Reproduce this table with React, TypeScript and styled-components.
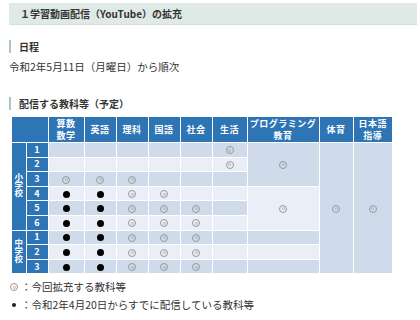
import styled, { createGlobalStyle } from 'styled-components'

const GlobalStyle = createGlobalStyle`
  body {
    margin: 0;
    background: #fff;
    font-family: "Noto Sans CJK JP", "Noto Sans", sans-serif;
    color: #333;
  }
`

const Page = styled.div`
  width: 420px;
  height: 320px;
  padding: 3px 3px 0 9px;
  box-sizing: border-box;
  display: flex;
  flex-direction: column;
  overflow: hidden;
`

const TitleBar = styled.div`
  height: 21px;
  line-height: 21px;
  padding-left: 11px;
  background: #dfeae6;
  border-bottom: 1px solid #d3e0db;
  font-size: 10px;
  font-weight: 700;
  color: #333;
`

const Heading = styled.div<{ $top: number }>`
  margin-top: ${p => p.$top}px;
  height: 13px;
  line-height: 13px;
  border-left: 2px solid #a9c7bc;
  padding-left: 8px;
  font-size: 10px;
  font-weight: 700;
`

const Text = styled.div<{ $top: number }>`
  margin-top: ${p => p.$top}px;
  line-height: 14px;
  font-size: 10.5px;
  white-space: nowrap;
`

const Table = styled.table`
  margin: 7px 0 0 3px;
  width: 380px;
  border-collapse: collapse;
  table-layout: fixed;
  font-size: 9px;
`

const Th = styled.th`
  height: 25px;
  padding: 0;
  background: #2e75b6;
  color: #fff;
  font-weight: 700;
  line-height: 12px;
  text-align: center;
  vertical-align: middle;
  border: 1px solid #fff;
  border-top: none;
  white-space: nowrap;
  letter-spacing: 0.5px;
`

const Side = styled.th`
  padding: 0;
  background: #2e75b6;
  color: #fff;
  font-weight: 700;
  font-size: 8.5px;
  border: 1px solid #fff;
  border-left: none;
  text-align: center;
  vertical-align: middle;
`

const VText = styled.span`
  display: inline-block;
  writing-mode: vertical-rl;
  text-orientation: upright;
  line-height: 10px;
  letter-spacing: -0.5px;
`

const Grade = styled.th`
  padding: 0;
  height: 13.6px;
  background: #2e75b6;
  color: #fff;
  font-weight: 700;
  font-size: 9px;
  line-height: 10px;
  border: 1px solid #fff;
  text-align: center;
`

const Td = styled.td<{ $dark: boolean }>`
  padding: 0;
  background: ${p => (p.$dark ? '#cfdaeb' : '#e9eef7')};
  border: 1px solid #fff;
  text-align: center;
  vertical-align: middle;
  line-height: 10px;
`

const Ring = styled.span`
  display: inline-block;
  width: 8px;
  height: 8px;
  box-sizing: border-box;
  border: 1px solid #999;
  border-radius: 50%;
  position: relative;
  vertical-align: middle;
  &::after {
    content: '';
    position: absolute;
    left: 1.5px;
    top: 1.5px;
    width: 3px;
    height: 3px;
    box-sizing: border-box;
    border: 1px solid #b0b0b0;
    border-radius: 50%;
  }
`

const Dot = styled.span`
  display: inline-block;
  width: 7px;
  height: 7px;
  border-radius: 50%;
  background: #000;
  vertical-align: middle;
`

const Legend = styled.div<{ $top: number }>`
  margin-top: ${p => p.$top}px;
  line-height: 14px;
  font-size: 10.5px;
  display: flex;
  align-items: center;
  white-space: nowrap;
`

const Mark = styled.span`
  width: 10px;
  display: inline-flex;
  justify-content: center;
  margin-right: 2px;
`

const SmallDot = styled.span`
  width: 4px;
  height: 4px;
  border-radius: 50%;
  background: #222;
`

type Cell = '' | 'o' | 'x'

// 算数数学, 英語, 理科, 国語, 社会, 生活
const rows: Cell[][] = [
  ['', '', '', '', '', 'o'],
  ['', '', '', '', '', 'o'],
  ['o', 'o', 'o', '', '', ''],
  ['x', 'x', 'o', 'o', '', ''],
  ['x', 'x', 'o', 'o', 'o', ''],
  ['x', 'x', 'o', 'o', 'o', ''],
  ['x', 'x', 'o', 'o', 'o', ''],
  ['x', 'x', 'o', 'o', 'o', ''],
  ['x', 'x', 'o', 'o', 'o', ''],
]

const grades = ['1', '2', '3', '4', '5', '6', '1', '2', '3']
const widths = [14, 22, 36, 32, 32, 32, 32, 35, 72, 34, 39]

const mark = (c: Cell) => (c === 'o' ? <Ring /> : c === 'x' ? <Dot /> : null)

export default function App() {
  return (
    <>
      <GlobalStyle />
      <Page>
        <TitleBar>１学習動画配信（YouTube）の拡充</TitleBar>
        <Heading $top={15}>日程</Heading>
        <Text $top={7}>令和2年5月11日（月曜日）から順次</Text>
        <Heading $top={23}>配信する教科等（予定）</Heading>
        <Table>
          <colgroup>
            {widths.map((w, i) => (
              <col key={i} style={{ width: w }} />
            ))}
          </colgroup>
          <thead>
            <tr>
              <Th colSpan={2} style={{ borderLeft: 'none' }} />
              <Th>算数<br />数学</Th>
              <Th>英語</Th>
              <Th>理科</Th>
              <Th>国語</Th>
              <Th>社会</Th>
              <Th>生活</Th>
              <Th>プログラミング<br />教育</Th>
              <Th>体育</Th>
              <Th style={{ borderRight: 'none' }}>日本語<br />指導</Th>
            </tr>
          </thead>
          <tbody>
            {rows.map((r, i) => {
              const dark = i % 2 === 0
              return (
                <tr key={i}>
                  {i === 0 && (
                    <Side rowSpan={6}>
                      <VText>小学校</VText>
                    </Side>
                  )}
                  {i === 6 && (
                    <Side rowSpan={3}>
                      <VText>中学校</VText>
                    </Side>
                  )}
                  <Grade>{grades[i]}</Grade>
                  {r.map((c, j) => (
                    <Td key={j} $dark={dark}>
                      {mark(c)}
                    </Td>
                  ))}
                  {i === 0 && (
                    <Td $dark rowSpan={3}>
                      <Ring />
                    </Td>
                  )}
                  {i === 3 && (
                    <Td $dark={false} rowSpan={3}>
                      <Ring />
                    </Td>
                  )}
                  {i >= 6 && <Td $dark={dark} />}
                  {i === 0 && (
                    <>
                      <Td $dark rowSpan={9}>
                        <Ring />
                      </Td>
                      <Td $dark rowSpan={9} style={{ borderRight: 'none' }}>
                        <Ring />
                      </Td>
                    </>
                  )}
                </tr>
              )
            })}
          </tbody>
        </Table>
        <Legend $top={6}>
          <Mark>
            <Ring />
          </Mark>
          ：今回拡充する教科等
        </Legend>
        <Legend $top={4}>
          <Mark>
            <SmallDot />
          </Mark>
          ：令和2年4月20日からすでに配信している教科等
        </Legend>
      </Page>
    </>
  )
}
